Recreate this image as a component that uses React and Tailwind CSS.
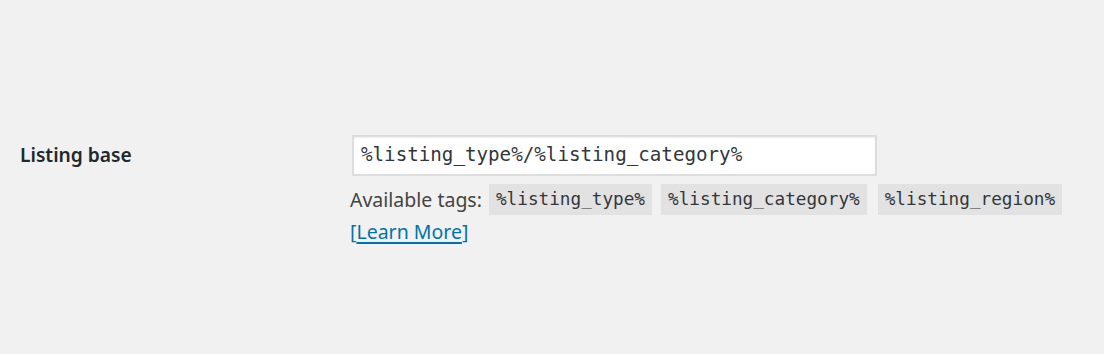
export default function App() {
  const sans = { fontFamily: '"Noto Sans", "Open Sans", sans-serif' };
  return (
    <div className="w-[1104px] h-[354px] bg-[#f1f1f1] text-[#23282d]" style={sans}>
      <div className="flex pl-[20px] pt-[135px]">
        <div className="w-[330px] shrink-0 pt-[8px] text-[19.2px] font-semibold leading-[24px]">
          Listing base
        </div>
        <div className="flex flex-col">
          <div className="ml-[2px] w-[525px] h-[41px] border-2 border-[#dddddd] bg-white shadow-[inset_0_1px_2px_rgba(0,0,0,0.07)] flex items-center pl-[7px] font-['DejaVu_Sans_Mono',monospace] text-[19.2px] text-[#32373c]">
            %listing_type%/%listing_category%
          </div>
          <div className="mt-[8px] flex items-center text-[19.5px] text-[#444] leading-[31px]">
            <span className="mr-[7px]">Available tags:</span>
            <code className="bg-[#e2e2e2] px-[7px] h-[31px] flex items-center font-['DejaVu_Sans_Mono',monospace] text-[17.7px] text-[#32373c]">%listing_type%</code>
            <code className="ml-[9px] bg-[#e2e2e2] px-[7px] h-[31px] flex items-center font-['DejaVu_Sans_Mono',monospace] text-[17.7px] text-[#32373c]">%listing_category%</code>
            <code className="ml-[11px] bg-[#e2e2e2] px-[7px] h-[31px] flex items-center font-['DejaVu_Sans_Mono',monospace] text-[17.7px] text-[#32373c]">%listing_region%</code>
          </div>
          <div className="mt-[2px] text-[19.5px] leading-[30px] text-[#0073aa]">
            [<a href="#" className="underline decoration-2 underline-offset-[3px] text-[#0073aa]">Learn More</a>]
          </div>
        </div>
      </div>
    </div>
  );
}
